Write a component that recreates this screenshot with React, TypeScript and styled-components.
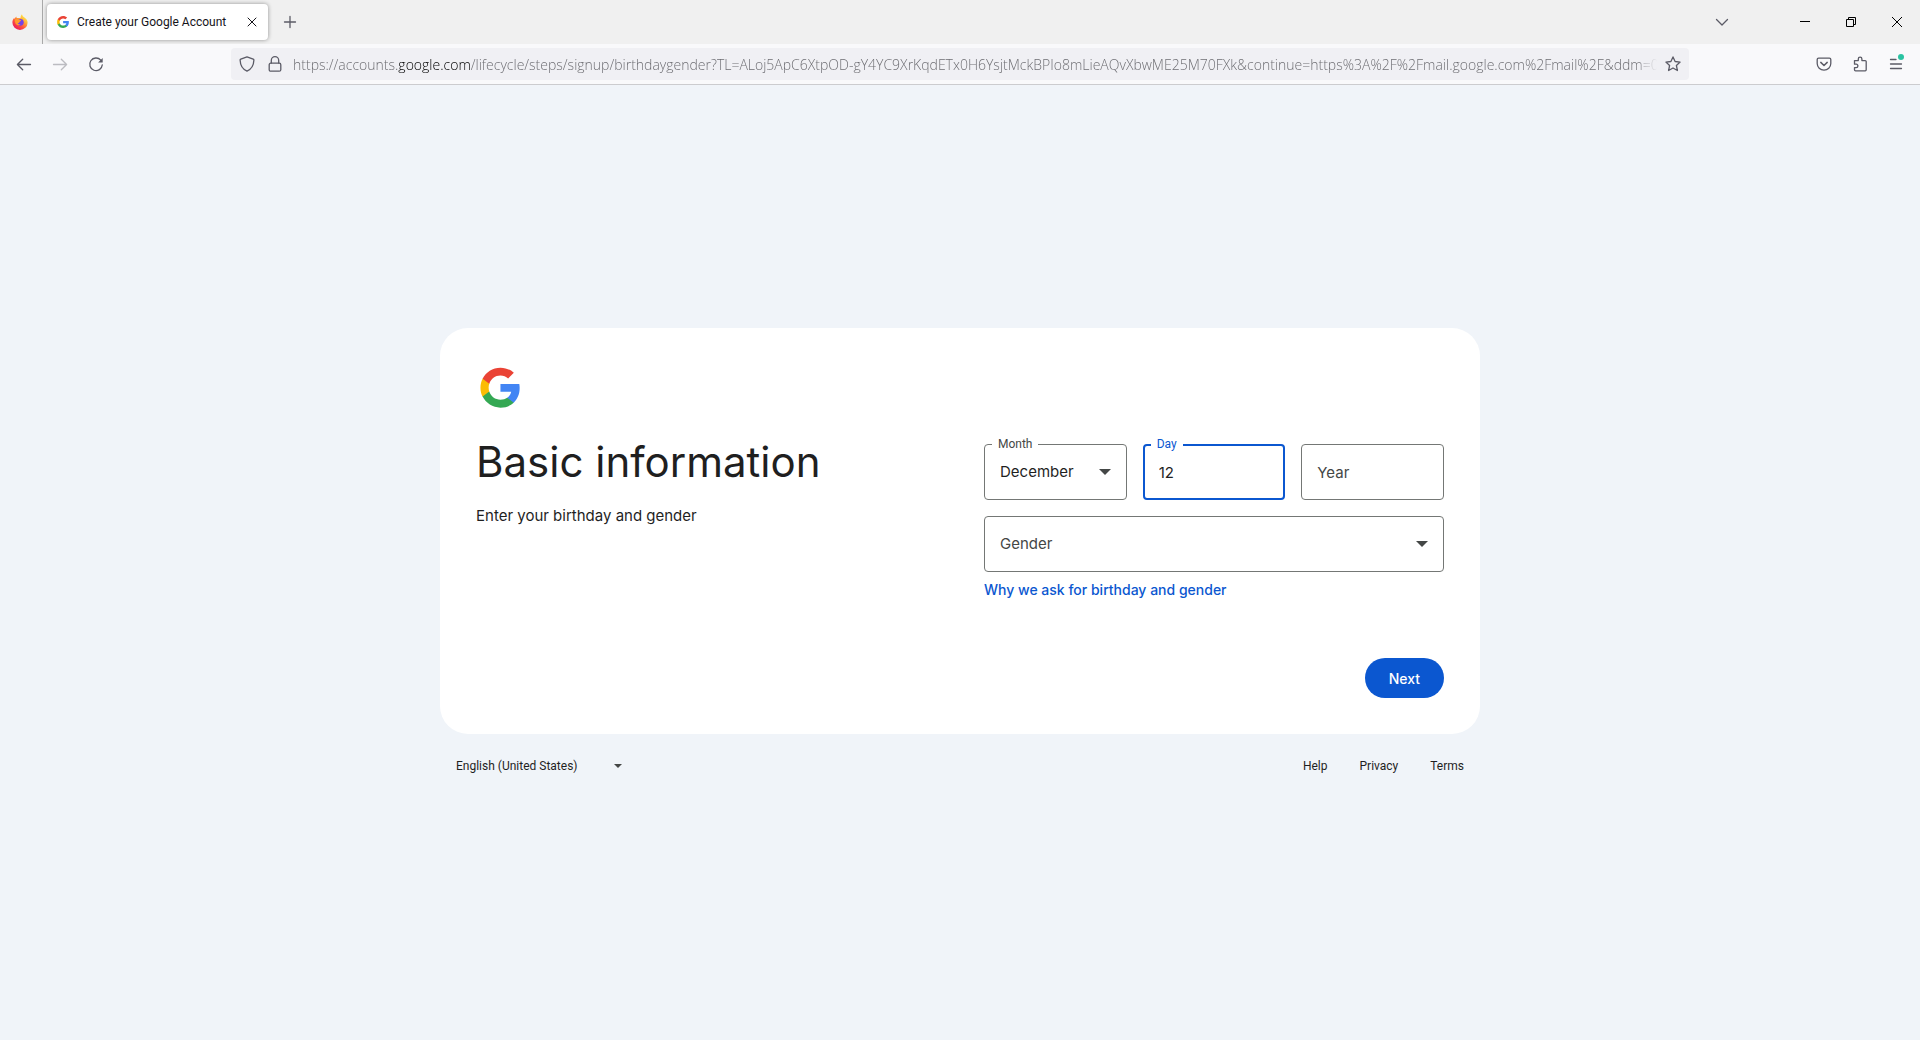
import { useLayoutEffect, useState } from "react";
import type { CSSProperties, ReactNode } from "react";
import styled, { createGlobalStyle, css } from "styled-components";

const fonts = {
  display: '"Inter", "Roboto", sans-serif',
  small: '"Roboto", "Inter", sans-serif',
  chrome: '"Open Sans", "Noto Sans", sans-serif',
};

const GlobalStyle = createGlobalStyle`
  *, *::before, *::after { box-sizing: border-box; }
  body { margin: 0; background: #f0f4f9; }
  button, input, select { font: inherit; color: inherit; margin: 0; }
  svg { display: block; }
`;

const Window = styled.div`
  display: flex;
  flex-direction: column;
  min-height: 100vh;
  font-family: ${fonts.small};
  color: #1f1f1f;
`;

/* Browser chrome */

const TabStrip = styled.header`
  display: flex;
  align-items: center;
  height: 44px;
  background: #f0f0f0;
`;

const PinnedTab = styled.button`
  display: flex;
  align-items: center;
  align-self: stretch;
  justify-content: center;
  width: 43px;
  padding: 0 2px 0 0;
  border: 0;
  border-right: 1px solid #a9a9a9;
  background: none;
`;

const Tab = styled.div`
  display: flex;
  align-items: center;
  gap: 8px;
  width: 221px;
  height: 36px;
  margin-left: 4px;
  padding: 0 8px 0 10px;
  border-radius: 4px;
  background: #fff;
  box-shadow: 0 0 4px rgba(0, 0, 0, 0.4);
`;

const TabTitle = styled.span`
  flex: 1;
  overflow: hidden;
  font-size: 12px;
  line-height: 16px;
  white-space: nowrap;
  color: #15141a;
`;

const IconButton = styled.button<{ $width?: number; $color?: string }>`
  display: flex;
  align-items: center;
  justify-content: center;
  flex: none;
  width: ${(p) => p.$width ?? 36}px;
  height: 32px;
  padding: 0;
  border: 0;
  background: none;
  color: ${(p) => p.$color ?? "#5b5b66"};
`;

const WindowControls = styled.div`
  display: flex;
  margin-left: 40px;
`;

const Grow = styled.div`
  flex: 1;
`;

const NavBar = styled.nav`
  display: flex;
  align-items: center;
  height: 41px;
  padding: 0 6px;
  border-bottom: 1px solid #cccccf;
  background: #f9f9fb;
`;

const UrlBar = styled.div`
  display: flex;
  align-items: center;
  flex: 1;
  min-width: 0;
  height: 32px;
  margin: 0 117px;
  padding: 0 2px;
  border-radius: 4px;
  background: #f0f0f4;
`;

const UrlInput = styled.input`
  flex: 1;
  min-width: 0;
  height: 32px;
  margin: 0 2px 0 4px;
  padding: 0;
  border: 0;
  outline: 0;
  font-family: ${fonts.chrome};
  font-size: 14px;
  font-weight: 300;
  color: #68686d;
  background: linear-gradient(
    to right,
    #68686d var(--host-start),
    #000 var(--host-start),
    #000 var(--host-end),
    #68686d var(--host-end),
    #68686d calc(100% - 20px),
    transparent
  );
  -webkit-background-clip: text;
  background-clip: text;
  -webkit-text-fill-color: transparent;
`;

/* Sign-up page */

const Page = styled.main`
  display: flex;
  flex: 1;
  flex-direction: column;
  align-items: center;
  justify-content: center;
  background: #f0f4f9;
`;

const Card = styled.section`
  width: 100%;
  max-width: 1040px;
  padding: 36px;
  border-radius: 28px;
  background: #fff;
`;

const Columns = styled.div`
  display: grid;
  grid-template-columns: 1fr 1fr;
  gap: 48px;
  margin-top: 24px;
`;

const Title = styled.h1`
  margin: 0 0 16px;
  font-family: ${fonts.display};
  font-size: 42px;
  font-weight: 400;
  line-height: 52px;
`;

const Subtitle = styled.p`
  margin: 0;
  font-family: ${fonts.display};
  font-size: 15px;
  line-height: 24px;
`;

const Form = styled.form`
  display: flex;
  flex-direction: column;
  padding-top: 8px;
`;

const DateRow = styled.div`
  display: grid;
  grid-template-columns: repeat(3, 1fr);
  gap: 16px;
  margin-bottom: 16px;
`;

const FieldBox = styled.div`
  position: relative;
  display: grid;
  align-items: center;
  & > * {
    grid-area: 1 / 1;
  }
`;

const control = css<{ $active?: boolean; $empty?: boolean }>`
  width: 100%;
  height: 56px;
  padding: 0 ${(p) => (p.$active ? 14 : 15)}px;
  border: ${(p) => (p.$active ? "2px solid #0b57d0" : "1px solid #747775")};
  border-radius: 4px;
  outline: 0;
  background: #fff;
  font-family: ${fonts.display};
  font-size: 15px;
  line-height: 24px;
  color: ${(p) => (p.$empty ? "#444746" : "#1f1f1f")};
`;

const TextInput = styled.input<{ $active?: boolean }>`
  ${control}
  &::placeholder {
    color: #444746;
    opacity: 1;
  }
`;

const Select = styled.select<{ $empty?: boolean }>`
  ${control}
  appearance: none;
`;

const FloatingLabel = styled.label<{ $active?: boolean }>`
  position: absolute;
  top: -8px;
  left: 8px;
  padding: 0 6px;
  background: #fff;
  font-size: 12px;
  line-height: 16px;
  color: ${(p) => (p.$active ? "#0b57d0" : "#444746")};
`;

const Arrow = styled.svg`
  justify-self: end;
  margin-right: 16px;
  pointer-events: none;
  fill: #444746;
`;

const WhyLink = styled.a`
  align-self: flex-start;
  margin-top: 8px;
  font-family: ${fonts.display};
  font-size: 14px;
  font-weight: 500;
  line-height: 20px;
  color: #0b57d0;
  text-decoration: none;
`;

const NextButton = styled.button`
  align-self: flex-end;
  height: 40px;
  margin-top: 58px;
  padding: 0 24px;
  border: 0;
  border-radius: 20px;
  background: #0b57d0;
  font-family: ${fonts.display};
  font-size: 14px;
  font-weight: 500;
  color: #fff;
`;

const Footer = styled.footer`
  display: flex;
  align-items: center;
  justify-content: space-between;
  width: 100%;
  max-width: 1040px;
  padding: 24px 16px 23px;
  font-size: 12px;
  line-height: 16px;
`;

const LanguageBox = styled.div`
  display: grid;
  align-items: center;
  width: 182px;
  & > * {
    grid-area: 1 / 1;
  }
`;

const LanguageSelect = styled.select`
  height: 16px;
  padding: 0;
  border: 0;
  outline: 0;
  background: none;
  appearance: none;
`;

const FooterLinks = styled.nav`
  display: flex;
  gap: 32px;
`;

const FooterLink = styled.a`
  color: #1f1f1f;
  text-decoration: none;
`;

/* Icons */

const GoogleLogo = ({ size, box = "0 0 48 48" }: { size: number; box?: string }) => (
  <svg width={size} height={size} viewBox={box} aria-hidden="true">
    <g transform="translate(-0.6)">
      <path fill="#4285F4" d="M45.12 24.5c0-1.56-.14-3.06-.4-4.5H24v8.51h11.84c-.51 2.75-2.06 5.08-4.39 6.64v5.52h7.11c4.16-3.83 6.56-9.47 6.56-16.17z" />
      <path fill="#34A853" d="M24 46c5.94 0 10.92-1.97 14.56-5.33l-7.11-5.52c-1.97 1.32-4.49 2.1-7.45 2.1-5.73 0-10.58-3.87-12.31-9.07H4.34v5.7C7.96 41.07 15.4 46 24 46z" />
      <path fill="#FBBC05" d="M11.69 28.18C11.25 26.86 11 25.45 11 24s.25-2.86.69-4.18v-5.7H4.34C2.85 17.09 2 20.45 2 24c0 3.55.85 6.91 2.34 9.88l7.35-5.7z" />
      <path fill="#EA4335" d="M24 10.75c3.23 0 6.13 1.11 8.41 3.29l6.31-6.31C34.91 4.18 29.93 2 24 2 15.4 2 7.96 6.93 4.34 14.12l7.35 5.7c1.73-5.2 6.58-9.07 12.31-9.07z" />
    </g>
  </svg>
);

const FirefoxIcon = () => (
  <svg width="16" height="16" viewBox="0 0 16 16" aria-hidden="true">
    <defs>
      <linearGradient id="fx-body" x1="0.85" y1="0.1" x2="0.2" y2="0.95">
        <stop offset="0" stopColor="#fff44f" />
        <stop offset="0.35" stopColor="#ffa436" />
        <stop offset="0.65" stopColor="#ff4f3e" />
        <stop offset="1" stopColor="#e8155f" />
      </linearGradient>
    </defs>
    <path
      fill="url(#fx-body)"
      d="M10 .2c.2 1.2.8 2 1.8 2.9C14.3 4.6 15.6 6.4 15.6 8.7A7.6 7.3 0 0 1 .4 8.6C.4 6.3 1.3 4.8 2.2 3.7c0 .5.1.9.3 1.2.5-1.2 1.2-2 2-2.500-.1.7 0 1.200.3 1.700L8.600 4C8.400 2.500 9 1.200 10 .2z"
    />
    <circle cx="8.300" cy="8.300" r="3.400" fill="#7542e5" />
    <path fill="#ff9a2e" d="M2.800 5.600c1.500-1 3.200-1 4.400 0 .5.5 1.400.5 2 .6-.1.9-1.300 1.100-1.700 1.700-.2.800-1 1.300-1.900 1.200.6 1 1.600 1.500 2.900 1.200-1.200 1.500-4 1-5-.9-.7-1.300-.9-2.600-.7-3.800z" />
  </svg>
);

const Stroke = ({ children, size = 16 }: { children: ReactNode; size?: number }) => (
  <svg
    width={size}
    height={size}
    viewBox="0 0 16 16"
    fill="none"
    stroke="currentColor"
    strokeWidth="1.3"
    strokeLinecap="round"
    strokeLinejoin="round"
    aria-hidden="true"
  >
    {children}
  </svg>
);

const DropArrow = () => (
  <Arrow width="12" height="6" viewBox="0 0 12 6" aria-hidden="true">
    <path d="M0 0h12L6 6z" />
  </Arrow>
);

/* Address bar, with the host part of the address emphasised */

const HOST_PREFIX = "https://accounts.";
const HOST = "google.com";
const URL_TEXT =
  HOST_PREFIX +
  HOST +
  "/lifecycle/steps/signup/birthdaygender?TL=ALoj5ApC6XtpOD-gY4YC9XrKqdETx0H6YsjtMckBPIo8mLieAQvXbwME25M70FXk&continue=https%3A%2F%2Fmail.google.com%2Fmail%2F&ddm=0&c";

function AddressInput() {
  const [host, setHost] = useState({ start: 0, end: 0 });
  useLayoutEffect(() => {
    const ctx = document.createElement("canvas").getContext("2d");
    if (!ctx) return;
    ctx.font = `300 14px ${fonts.chrome}`;
    setHost({
      start: Math.round(ctx.measureText(HOST_PREFIX).width),
      end: Math.round(ctx.measureText(HOST_PREFIX + HOST).width),
    });
  }, []);
  return (
    <UrlInput
      aria-label="Address"
      type="text"
      defaultValue={URL_TEXT}
      spellCheck={false}
      style={{ "--host-start": `${host.start}px`, "--host-end": `${host.end}px` } as CSSProperties}
    />
  );
}

export default function App() {
  return (
    <Window>
      <GlobalStyle />
      <TabStrip>
        <PinnedTab type="button" aria-label="Firefox View">
          <FirefoxIcon />
        </PinnedTab>
        <Tab>
          <GoogleLogo size={12} box="1 2 44 44" />
          <TabTitle>Create your Google Account</TabTitle>
          <IconButton type="button" aria-label="Close tab" $width={16} $color="#15141a">
            <Stroke>
              <path d="M4 4l8 8M12 4l-8 8" strokeWidth="1" />
            </Stroke>
          </IconButton>
        </Tab>
        <IconButton type="button" aria-label="New tab" $width={44}>
          <Stroke>
            <path d="M8 2.500v11M2.500 8h11" />
          </Stroke>
        </IconButton>
        <Grow />
        <IconButton type="button" aria-label="List all tabs" $width={40}>
          <Stroke>
            <path d="M2.500 5.500L8 11l5.500-5.500" />
          </Stroke>
        </IconButton>
        <WindowControls>
          <IconButton type="button" aria-label="Minimize" $width={46} $color="#000">
            <svg width="10" height="10" viewBox="0 0 10 10" aria-hidden="true">
              <path d="M0 4h10v1H0z" />
            </svg>
          </IconButton>
          <IconButton type="button" aria-label="Restore" $width={46} $color="#000">
            <svg width="10" height="10" viewBox="0 0 10 10" fill="none" stroke="#000" aria-hidden="true">
              <path d="M.5 2.500h7v7h-7zM2.500 2.500v-2h7v7h-2" />
            </svg>
          </IconButton>
          <IconButton type="button" aria-label="Close" $width={46} $color="#000">
            <svg width="10" height="10" viewBox="0 0 10 10" stroke="#000" aria-hidden="true">
              <path d="M0 0l10 10M10 0L0 10" />
            </svg>
          </IconButton>
        </WindowControls>
      </TabStrip>

      <NavBar aria-label="Browser toolbar">
        <IconButton type="button" aria-label="Back">
          <Stroke>
            <path d="M14.500 8.500h-13M6.700 3.200L1.400 8.500l5.300 5.300" />
          </Stroke>
        </IconButton>
        <IconButton type="button" aria-label="Forward" $color="#bcbcc1">
          <Stroke>
            <path d="M1.500 8.500h13M9.300 3.200l5.300 5.300-5.300 5.300" />
          </Stroke>
        </IconButton>
        <IconButton type="button" aria-label="Reload">
          <Stroke>
            <path d="M12.800 4.200A6.300 6.300 0 1 0 14.300 8.800" />
            <path d="M14.700 2v4.600h-4.600z" fill="currentColor" stroke="none" />
          </Stroke>
        </IconButton>
        <UrlBar>
          <IconButton type="button" aria-label="Tracking protection" $width={28}>
            <Stroke>
              <path d="M8 .9l6.200 2.300c.5.200.7.500.7.900C14.700 9.500 12.200 13.400 8 15.200 3.800 13.400 1.300 9.500 1.100 4.100c0-.4.2-.7.7-.9z" />
            </Stroke>
          </IconButton>
          <IconButton type="button" aria-label="Connection secure" $width={28}>
            <Stroke>
              <rect x="2.200" y="7.200" width="11.600" height="8" rx="1.500" />
              <path d="M4.300 7V4.400a3.700 3.700 0 0 1 7.400 0V7" />
            </Stroke>
          </IconButton>
          <AddressInput />
          <IconButton type="button" aria-label="Bookmark this page" $width={28}>
            <Stroke>
              <path d="M8 .9l2.100 4.600 5 .6-3.700 3.400 1 5L8 12l-4.400 2.500 1-5L.9 6.100l5-.6z" />
            </Stroke>
          </IconButton>
        </UrlBar>
        <IconButton type="button" aria-label="Save to Pocket">
          <Stroke>
            <path d="M2.600 2.200h10.800c.8 0 1.400.6 1.400 1.400v4a6.800 6.500 0 0 1-13.600 0v-4c0-.8.6-1.400 1.400-1.400z" />
            <path d="M4.800 6.400L8 9.500l3.200-3.100" strokeWidth="1.500" />
          </Stroke>
        </IconButton>
        <IconButton type="button" aria-label="Extensions">
          <Stroke>
            <path d="M2.500 4.600h3.800V3a1.800 1.800 0 0 1 3.600 0v1.600h3.300c.6 0 1 .4 1 1v8.200c0 .6-.4 1-1 1H3.500c-.6 0-1-.4-1-1v-2.200h1.700a1.700 1.700 0 0 0 0-3.400H2.500z" />
          </Stroke>
        </IconButton>
        <IconButton type="button" aria-label="Open application menu">
          <svg width="24" height="24" viewBox="0 0 24 24" fill="none" stroke="currentColor" strokeWidth="1.300" aria-hidden="true">
            <path d="M6.500 7.500H12M6.500 12h11M6.500 16.500h11" strokeLinecap="round" />
            <circle cx="17" cy="5" r="3" fill="#2ac3a2" stroke="none" />
          </svg>
        </IconButton>
      </NavBar>

      <Page>
        <Card>
          <GoogleLogo size={48} box="-3.500 -2 52.800 52.800" />
          <Columns>
            <div>
              <Title>Basic information</Title>
              <Subtitle>Enter your birthday and gender</Subtitle>
            </div>
            <Form onSubmit={(e) => e.preventDefault()}>
              <DateRow>
                <FieldBox>
                  <Select id="month" defaultValue="December">
                    <option>December</option>
                  </Select>
                  <FloatingLabel htmlFor="month">Month</FloatingLabel>
                  <DropArrow />
                </FieldBox>
                <FieldBox>
                  <TextInput id="day" type="text" inputMode="numeric" defaultValue="12" $active />
                  <FloatingLabel htmlFor="day" $active>
                    Day
                  </FloatingLabel>
                </FieldBox>
                <FieldBox>
                  <TextInput type="text" inputMode="numeric" aria-label="Year" placeholder="Year" />
                </FieldBox>
              </DateRow>
              <FieldBox>
                <Select aria-label="Gender" defaultValue="" $empty>
                  <option value="">Gender</option>
                </Select>
                <DropArrow />
              </FieldBox>
              <WhyLink href="#why">Why we ask for birthday and gender</WhyLink>
              <NextButton type="submit">Next</NextButton>
            </Form>
          </Columns>
        </Card>
        <Footer>
          <LanguageBox>
            <LanguageSelect aria-label="Language" defaultValue="en-US">
              <option value="en-US">English (United States)</option>
            </LanguageSelect>
            <Arrow width="8" height="4" viewBox="0 0 8 4" aria-hidden="true">
              <path d="M0 0h8L4 4z" />
            </Arrow>
          </LanguageBox>
          <FooterLinks aria-label="Account links">
            <FooterLink href="#help">Help</FooterLink>
            <FooterLink href="#privacy">Privacy</FooterLink>
            <FooterLink href="#terms">Terms</FooterLink>
          </FooterLinks>
        </Footer>
      </Page>
    </Window>
  );
}
